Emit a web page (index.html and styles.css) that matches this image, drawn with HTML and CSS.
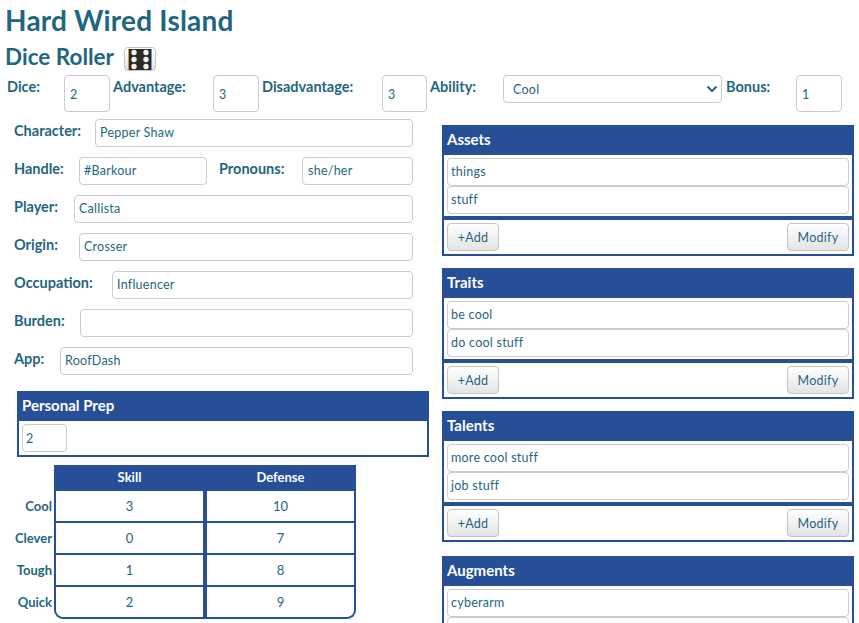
FILE: index.html
```html
<!DOCTYPE html>
<html lang="en">
<head>
<meta charset="utf-8">
<title>Hard Wired Island</title>
<link rel="stylesheet" href="styles.css">
</head>
<body>
<h1 class="title">Hard Wired Island</h1>
<div class="roller-head">
  <h2 class="subtitle">Dice Roller</h2>
  <button class="die-btn" type="button" aria-label="Roll">
    <svg width="24" height="21" viewBox="0 0 24 21">
      <rect x="0" y="0" width="24" height="21" fill="#2b2b2b"/>
      <rect x="0" y="0" width="1" height="21" fill="#d99a3c"/>
      <rect x="23" y="0" width="1" height="21" fill="#5a9bd5"/>
      <g fill="#f4f1e6">
        <circle cx="6" cy="3.500" r="2.700"/><circle cx="6" cy="10.500" r="2.700"/><circle cx="6" cy="17.500" r="2.700"/>
        <circle cx="18" cy="3.500" r="2.700"/><circle cx="18" cy="10.500" r="2.700"/><circle cx="18" cy="17.500" r="2.700"/>
      </g>
    </svg>
  </button>
</div>
<div class="dice-row">
  <label class="lbl w-dice">Dice:</label><input class="field num" value="2">
  <label class="lbl w-adv">Advantage:</label><input class="field num" value="3">
  <label class="lbl w-dis">Disadvantage:</label><input class="field num" value="3">
  <label class="lbl w-abi">Ability:</label>
  <div class="select"><span>Cool</span>
    <svg width="12" height="8" viewBox="0 0 12 8"><path d="M1.500 1.500 6 6l4.500-4.500" fill="none" stroke="#1f6680" stroke-width="2"/></svg>
  </div>
  <label class="lbl w-bon">Bonus:</label><input class="field num" value="1">
</div>
<main class="columns">
  <section class="left">
    <div class="row"><label class="lbl w-char">Character:</label><input class="field grow" value="Pepper Shaw"></div>
    <div class="row"><label class="lbl w-handle">Handle:</label><input class="field handle" value="#Barkour"><label class="lbl w-pro">Pronouns:</label><input class="field grow" value="she/her"></div>
    <div class="row"><label class="lbl w-player">Player:</label><input class="field grow" value="Callista"></div>
    <div class="row"><label class="lbl w-origin">Origin:</label><input class="field grow" value="Crosser"></div>
    <div class="row"><label class="lbl w-occ">Occupation:</label><input class="field grow" value="Influencer"></div>
    <div class="row"><label class="lbl w-burden">Burden:</label><input class="field grow" value=""></div>
    <div class="row"><label class="lbl w-app">App:</label><input class="field grow" value="RoofDash"></div>

    <div class="prep">
      <div class="head">Personal Prep</div>
      <div class="prep-body"><input class="field prep-input" value="2"></div>
    </div>

    <div class="stats">
      <div class="names">
        <div>Cool</div><div>Clever</div><div>Tough</div><div>Quick</div>
      </div>
      <div class="table">
        <div class="th">Skill</div><div class="th">Defense</div>
        <div class="td">3</div><div class="td">10</div>
        <div class="td">0</div><div class="td">7</div>
        <div class="td">1</div><div class="td">8</div>
        <div class="td bl">2</div><div class="td br">9</div>
      </div>
    </div>
  </section>

  <section class="right">
    <div class="panel">
      <div class="head">Assets</div>
      <div class="items"><div class="item">things</div><div class="item">stuff</div></div>
      <div class="foot"><button class="btn" type="button">+Add</button><button class="btn" type="button">Modify</button></div>
    </div>
    <div class="panel">
      <div class="head">Traits</div>
      <div class="items"><div class="item">be cool</div><div class="item">do cool stuff</div></div>
      <div class="foot"><button class="btn" type="button">+Add</button><button class="btn" type="button">Modify</button></div>
    </div>
    <div class="panel last-full">
      <div class="head">Talents</div>
      <div class="items"><div class="item">more cool stuff</div><div class="item">job stuff</div></div>
      <div class="foot"><button class="btn" type="button">+Add</button><button class="btn" type="button">Modify</button></div>
    </div>
    <div class="panel">
      <div class="head">Augments</div>
      <div class="items"><div class="item">cyberarm</div><div class="item">&nbsp;</div></div>
    </div>
  </section>
</main>
</body>
</html>
```
FILE: styles.css
```css
* { box-sizing: border-box; }
html, body { height: 100%; overflow: hidden; }
body {
  margin: 0;
  background: #fff;
  color: #1f6680;
  font-family: Lato, "Open Sans", sans-serif;
  font-size: 13px;
}
.title {
  margin: 0;
  padding: 2px 0 0 5px;
  height: 41px;
  font-size: 28px;
  line-height: 36px;
  font-weight: 700;
  letter-spacing: .2px;
}
.roller-head {
  display: flex;
  align-items: flex-start;
  height: 34px;
  padding: 0 0 0 5px;
}
.subtitle {
  margin: 1px 0 0;
  width: 119px;
  font-size: 22.500px;
  line-height: 30px;
  font-weight: 700;
}
.die-btn {
  width: 32px;
  height: 24px;
  margin-top: 6px;
  padding: 0;
  display: flex;
  align-items: center;
  justify-content: center;
  border: 1px solid #c4c4c4;
  border-radius: 4px;
  background: linear-gradient(#fff, #e2e2e2);
}
.lbl {
  display: block;
  flex: none;
  font-size: 14.500px;
  line-height: 24px;
  font-weight: 700;
}
.field {
  display: block;
  height: 28px;
  min-width: 0;
  padding: 0 5px 1px;
  border: 1px solid #ccc;
  border-radius: 4px;
  background: #fff;
  color: #1f6680;
  font: 12.500px Lato, "Open Sans", sans-serif;
  letter-spacing: .25px;
}
.dice-row {
  display: flex;
  align-items: flex-start;
  height: 44px;
  padding-left: 7px;
}
.num { width: 46px; height: 37px; margin-right: 3px; padding-top: 2px; padding-bottom: 0; }
.w-dice { width: 57px; }
.w-adv { width: 100px; }
.w-dis { width: 120px; }
.w-abi { width: 73px; }
.w-bon { width: 70px; }
.dice-row .num:nth-of-type(3) { width: 45px; }
.select {
  display: flex;
  align-items: center;
  justify-content: space-between;
  flex: none;
  width: 219px;
  height: 28px;
  margin-right: 4px;
  padding: 0 3px 0 9px;
  border: 1px solid #ccc;
  border-radius: 4px;
  font-size: 12.500px;
  letter-spacing: .25px;
}
.columns { display: flex; align-items: flex-start; }
.left { flex: none; width: 442px; }
.row {
  display: flex;
  align-items: flex-start;
  height: 28px;
  margin: 0 29px 10px 14px;
}
.grow { flex: 1; }
.handle { width: 128px; margin-right: 12px; }
.w-char { width: 81px; }
.w-handle { width: 65px; }
.w-pro { width: 83px; }
.w-player { width: 60px; }
.w-origin { width: 65px; }
.w-occ { width: 98px; }
.w-burden { width: 66px; }
.w-app { width: 46px; }
.w-char + .field, .w-handle + .field, .w-player + .field, .w-origin + .field, .w-occ + .field, .w-app + .field { padding-left: 4px; }
.head {
  height: 30px;
  padding-left: 5px;
  background: #274f98;
  color: #fff;
  font-size: 15px;
  line-height: 28px;
  font-weight: 700;
}
.prep {
  margin: 16px 13px 0 17px;
  border: 2px solid #274f98;
  border-top: 0;
}
.prep .head { margin: 0 -2px; }
.prep-body { height: 34px; padding: 3px; }
.prep-input { width: 45px; padding: 0 2px 0 3px; }
.stats { display: flex; margin: 8px 0 0 0; }
.names {
  width: 54px;
  padding-top: 24px;
  padding-right: 2px;
  text-align: right;
  font-size: 13px;
  font-weight: 700;
}
.names div { height: 32px; line-height: 32px; padding-top: 1px; }
.table {
  display: grid;
  grid-template-columns: 151px 151px;
  grid-template-rows: 26px repeat(4, 32px);
  width: 302px;
}
.th {
  background: #274f98;
  color: #fff;
  font-size: 13px;
  line-height: 25px;
  font-weight: 700;
  text-align: center;
}
.td {
  text-align: center;
  font-size: 13px;
  line-height: 30px;
  border: solid #274f98;
  border-width: 0 2px 2px 2px;
}
.bl { border-bottom-left-radius: 9px; }
.br { border-bottom-right-radius: 9px; }
.right { flex: none; width: 412px; margin-top: 6px; }
.panel {
  margin-bottom: 12px;
  border: 2px solid #274f98;
  border-top: 0;
}
.last-full { margin-bottom: 14px; }
.panel .head { margin: 0 -2px; }
.items {
  padding: 3px 3px 2px;
  border-bottom: 4px solid #274f98;
}
.item {
  height: 28px;
  padding: 0 3px;
  border: 1px solid #ccc;
  border-radius: 4px;
  font-size: 12.500px;
  line-height: 26px;
  letter-spacing: .25px;
}
.foot {
  display: flex;
  justify-content: space-between;
  height: 34px;
  padding: 3px;
}
.btn {
  height: 28px;
  min-width: 52px;
  padding: 0 8px;
  border: 1px solid #c4c4c4;
  border-radius: 4px;
  background: linear-gradient(#fff, #e4e4e4);
  color: #1f6680;
  font: 12.500px Lato, "Open Sans", sans-serif;
  letter-spacing: .25px;
}
.btn + .btn { min-width: 62px; }
```
